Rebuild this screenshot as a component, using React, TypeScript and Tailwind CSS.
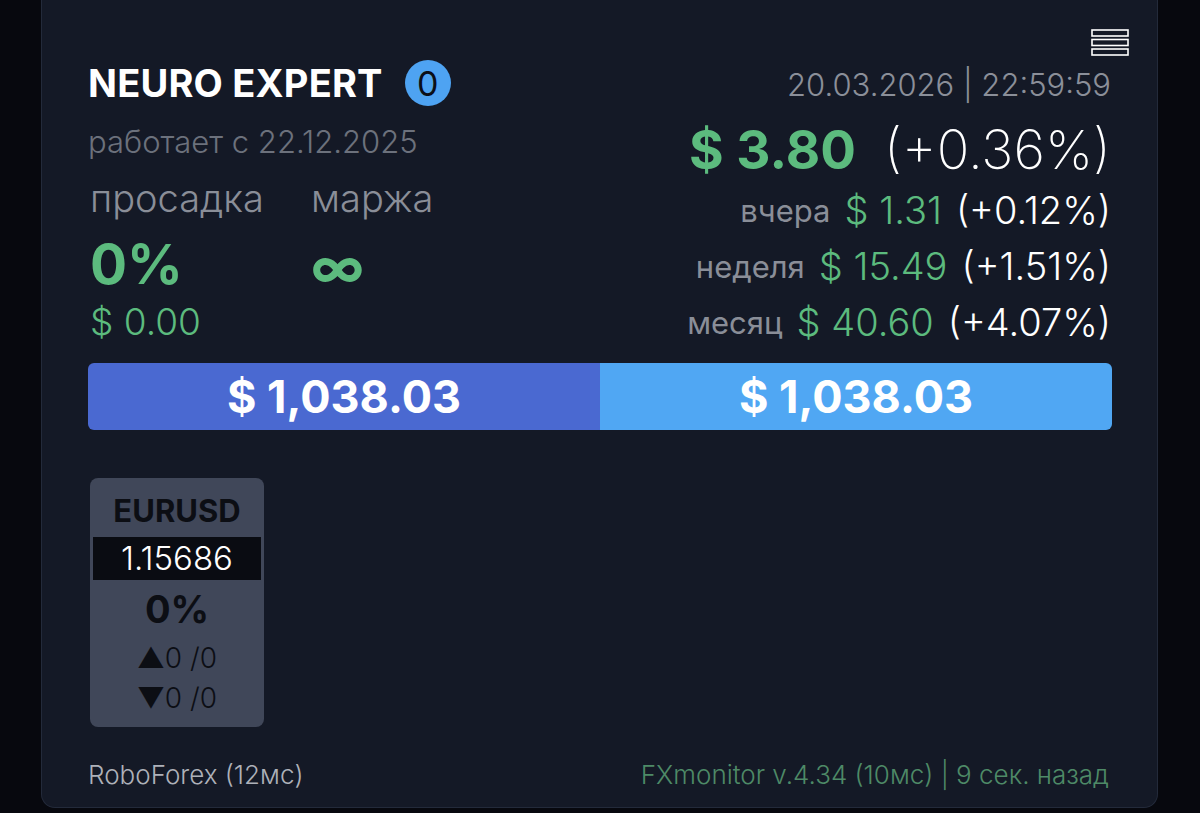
import React from "react";

const font = { fontFamily: "Inter, 'Noto Sans', sans-serif" };

function Menu() {
  return (
    <svg width="38" height="27" viewBox="0 0 38 27" className="absolute right-[28px] top-[29px]">
      <rect x="1" y="1" width="36" height="6" fill="none" stroke="#ffffff" strokeWidth="1.6" />
      <rect x="1" y="10.5" width="36" height="6" fill="none" stroke="#ffffff" strokeWidth="1.6" />
      <rect x="1" y="20" width="36" height="6" fill="none" stroke="#ffffff" strokeWidth="1.6" />
    </svg>
  );
}

function Row({ label, value, pct }: { label: string; value: string; pct: string }) {
  return (
    <div className="flex h-[56px] items-center justify-end gap-[14px] text-[38px] font-light leading-none">
      <span className="text-[31px] font-normal text-[#8a8e98]">{label}</span>
      <span className="text-[#5cbb7e]">{value}</span>
      <span className="text-white">{pct}</span>
    </div>
  );
}

export default function App() {
  return (
    <div className="min-h-[813px] w-[1200px] bg-[#07080e]" style={font}>
      <div className="relative ml-[41px] h-[808px] w-[1117px] rounded-b-[14px] border-x border-b border-[#232a3a] bg-[#141926] px-[46px] pt-[60px]">
        <Menu />
        <div className="flex justify-between">
          <div className="flex flex-col">
            <div className="flex h-[46px] items-center gap-[22px]">
              <span className="text-[38px] font-bold tracking-[0.2px] text-white">NEURO EXPERT</span>
              <span className="flex h-[46px] w-[46px] items-center justify-center rounded-full bg-[#4ea3f2] text-[34px] font-normal text-[#0b0f18]">0</span>
            </div>
            <div className="mt-[18px] flex h-[36px] items-center text-[31px] font-light text-[#6c717c]">работает с 22.12.2025</div>
            <div className="mt-[20px] grid grid-cols-[223px_auto]">
              <div className="flex h-[36px] items-center pl-[2px] text-[38px] font-light text-[#8a8e98]">просадка</div>
              <div className="flex h-[36px] items-center text-[38px] font-light text-[#8a8e98]">маржа</div>
              <div className="mt-[20px] flex h-[56px] items-center pl-[2px] text-[55px] font-bold text-[#5cbb7e]">0%</div>
              <div className="mt-[20px] flex h-[56px] items-center pt-[7px] text-[54px] font-bold leading-none text-[#5cbb7e]">∞</div>
              <div className="mt-[10px] flex h-[40px] items-center pl-[2px] text-[37px] font-light text-[#5cbb7e]">$ 0.00</div>
              <div />
            </div>
          </div>
          <div className="flex flex-col items-end">
            <div className="flex h-[50px] items-center text-[31px] font-light text-[#8b8f99]">20.03.2026 | 22:59:59</div>
            <div className="mt-[14px] flex h-[52px] items-center gap-[28px] leading-none">
              <span className="text-[53px] font-bold text-[#5cbb7e]">$ 3.80</span>
              <span className="text-[54px] font-extralight text-white">(+0.36%)</span>
            </div>
            <div className="mt-[6px]">
              <Row label="вчера" value="$ 1.31" pct="(+0.12%)" />
              <Row label="неделя" value="$ 15.49" pct="(+1.51%)" />
              <Row label="месяц" value="$ 40.60" pct="(+4.07%)" />
            </div>
          </div>
        </div>
        <div className="mt-[13px] flex h-[67px] w-[1024px] overflow-hidden rounded-[6px]">
          <div className="flex flex-1 items-center justify-center bg-[#4a69d1] text-[45px] font-bold text-white">$ 1,038.03</div>
          <div className="flex flex-1 items-center justify-center bg-[#50a7f3] text-[45px] font-bold text-white">$ 1,038.03</div>
        </div>
        <div className="mt-[48px] flex">
          <div className="ml-[2px] flex h-[249px] w-[174px] flex-col rounded-[8px] bg-[#404759] text-[#0c0e14]">
            <div className="flex h-[59px] items-center justify-center pt-[7px] text-[31px] font-bold">EURUSD</div>
            <div className="mx-[3px] flex h-[43px] items-center justify-center bg-[#0a0c12] text-[33px] font-light text-white">1.15686</div>
            <div className="flex h-[58px] items-center justify-center text-[38px] font-bold">0%</div>
            <div className="flex h-[40px] items-center justify-center text-[28px] font-light">▲0 /0</div>
            <div className="flex h-[40px] items-center justify-center text-[28px] font-light">▼0 /0</div>
          </div>
        </div>
        <div className="mt-[32px] flex h-[30px] items-center justify-between text-[26px] font-light">
          <span className="text-[#aeb1b9]">RoboForex (12мс)</span>
          <span className="mr-[2px] text-[#4e8a67]">FXmonitor v.4.34 (10мс) | 9 сек. назад</span>
        </div>
      </div>
    </div>
  );
}
